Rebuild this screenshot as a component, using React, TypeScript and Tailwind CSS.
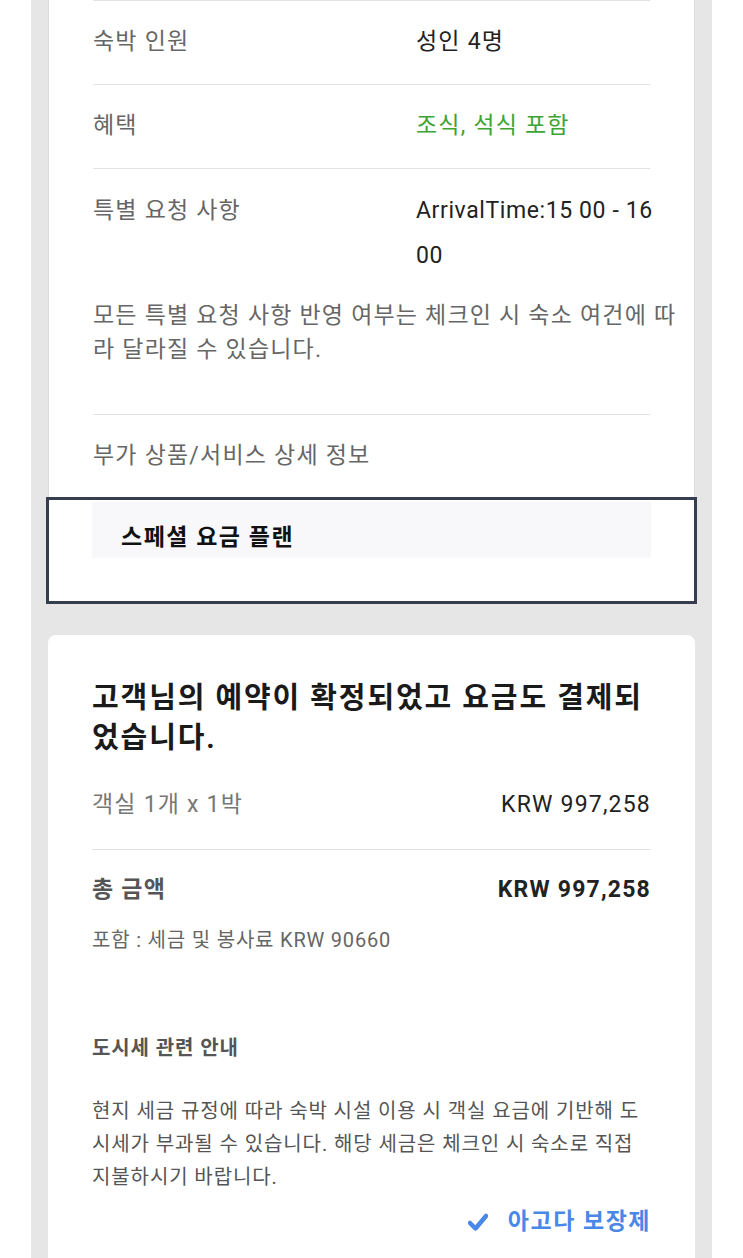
const font = { fontFamily: 'Roboto, "Noto Sans CJK KR", sans-serif' };

function InfoRow({ label, children }: { label: string; children: React.ReactNode }) {
  return (
    <div className="flex border-t border-[#e2e2e2] pt-[19px] pb-[20px] text-[23px] leading-[44px] tracking-[1.2px]">
      <div className="w-[323px] shrink-0 text-[#666]">{label}</div>
      <div className="flex-1 text-[#222]">{children}</div>
    </div>
  );
}

export default function App() {
  return (
    <div className="min-h-[1258px] bg-white" style={font}>
      <div className="mx-[31px] min-h-[1258px] bg-[#e6e6e6] px-[17px]">
        {/* booking details card, scrolled so its top is cut off */}
        <div className="border-x border-[#dcdcdc] bg-white px-[44px]">
          <InfoRow label="숙박 인원">성인 4명</InfoRow>
          <InfoRow label="혜택">
            <span className="text-[#3da434]">조식, 석식 포함</span>
          </InfoRow>
          <div className="border-t border-[#e2e2e2] pt-[19px] pb-[47px]">
            <div className="flex text-[23px] leading-[45px] tracking-[1.2px]">
              <div className="w-[323px] shrink-0 text-[#666]">특별 요청 사항</div>
              <div className="w-[252px] shrink-0 text-[#222] tracking-[0.6px]">ArrivalTime:15 00 - 16 00</div>
            </div>
            <p className="mt-[21px] -mr-[30px] break-all text-[23px] leading-[34px] tracking-[1.2px] text-[#666]">
              모든 특별 요청 사항 반영 여부는 체크인 시 숙소 여건에 따라 달라질 수 있습니다.
            </p>
          </div>
          <div className="border-t border-[#e2e2e2] pt-[19px] pb-[19px] text-[23px] leading-[44px] tracking-[1.2px] text-[#666]">
            부가 상품/서비스 상세 정보
          </div>
        </div>
        <div className="-mx-[2px] border-[3px] border-[#363d4f] bg-white px-[43px] pt-[2px] pb-[43px]">
          <div className="bg-[#f8f8fa] px-[29px] pt-[22px] pb-[6px] text-[23px] font-bold leading-[28px] tracking-[1.5px] text-[#111]">
            스페셜 요금 플랜
          </div>
        </div>

        {/* payment summary card */}
        <div className="mt-[31px] rounded-t-lg bg-white px-[44px] pt-[43px] pb-[20px]">
          <h2 className="break-all text-[29px] font-bold leading-[40px] tracking-[1.9px] text-[#1a1a1a]">
            고객님의 예약이 확정되었고 요금도 결제되었습니다.
          </h2>
          <div className="mt-[31px] flex justify-between pb-[28px] text-[23px] leading-[32px] tracking-[1.2px]">
            <span className="text-[#777]">객실 1개 x 1박</span>
            <span className="text-[#222]">KRW 997,258</span>
          </div>
          <div className="flex justify-between border-t border-[#e2e2e2] pt-[24px] text-[23px] font-bold leading-[32px] tracking-[1.2px]">
            <span className="text-[#555]">총 금액</span>
            <span className="text-[#222]">KRW 997,258</span>
          </div>
          <p className="mt-[20px] text-[20px] leading-[28px] tracking-[0.8px] text-[#666]">포함 : 세금 및 봉사료 KRW 90660</p>

          <h3 className="mt-[80px] text-[20px] font-bold leading-[28px] tracking-[0.9px] text-[#555]">도시세 관련 안내</h3>
          <p className="mt-[33px] break-all pr-[10px] text-[20px] leading-[33px] tracking-[0.9px] text-[#555]">
            현지 세금 규정에 따라 숙박 시설 이용 시 객실 요금에 기반해 도시세가 부과될 수 있습니다. 해당 세금은 체크인 시 숙소로 직접 지불하시기 바랍니다.
          </p>
          <div className="mt-[12px] flex items-center justify-end gap-[20px] text-[23px] font-bold leading-[32px] tracking-[1.5px] text-[#4a88e8]">
            <svg width="20" height="19" viewBox="0 0 20 19" fill="none">
              <path d="M2 10 L7.5 15.5 L18 3" stroke="#4a88e8" strokeWidth="4.5" strokeLinecap="round" strokeLinejoin="round" />
            </svg>
            아고다 보장제
          </div>
        </div>
      </div>
    </div>
  );
}
